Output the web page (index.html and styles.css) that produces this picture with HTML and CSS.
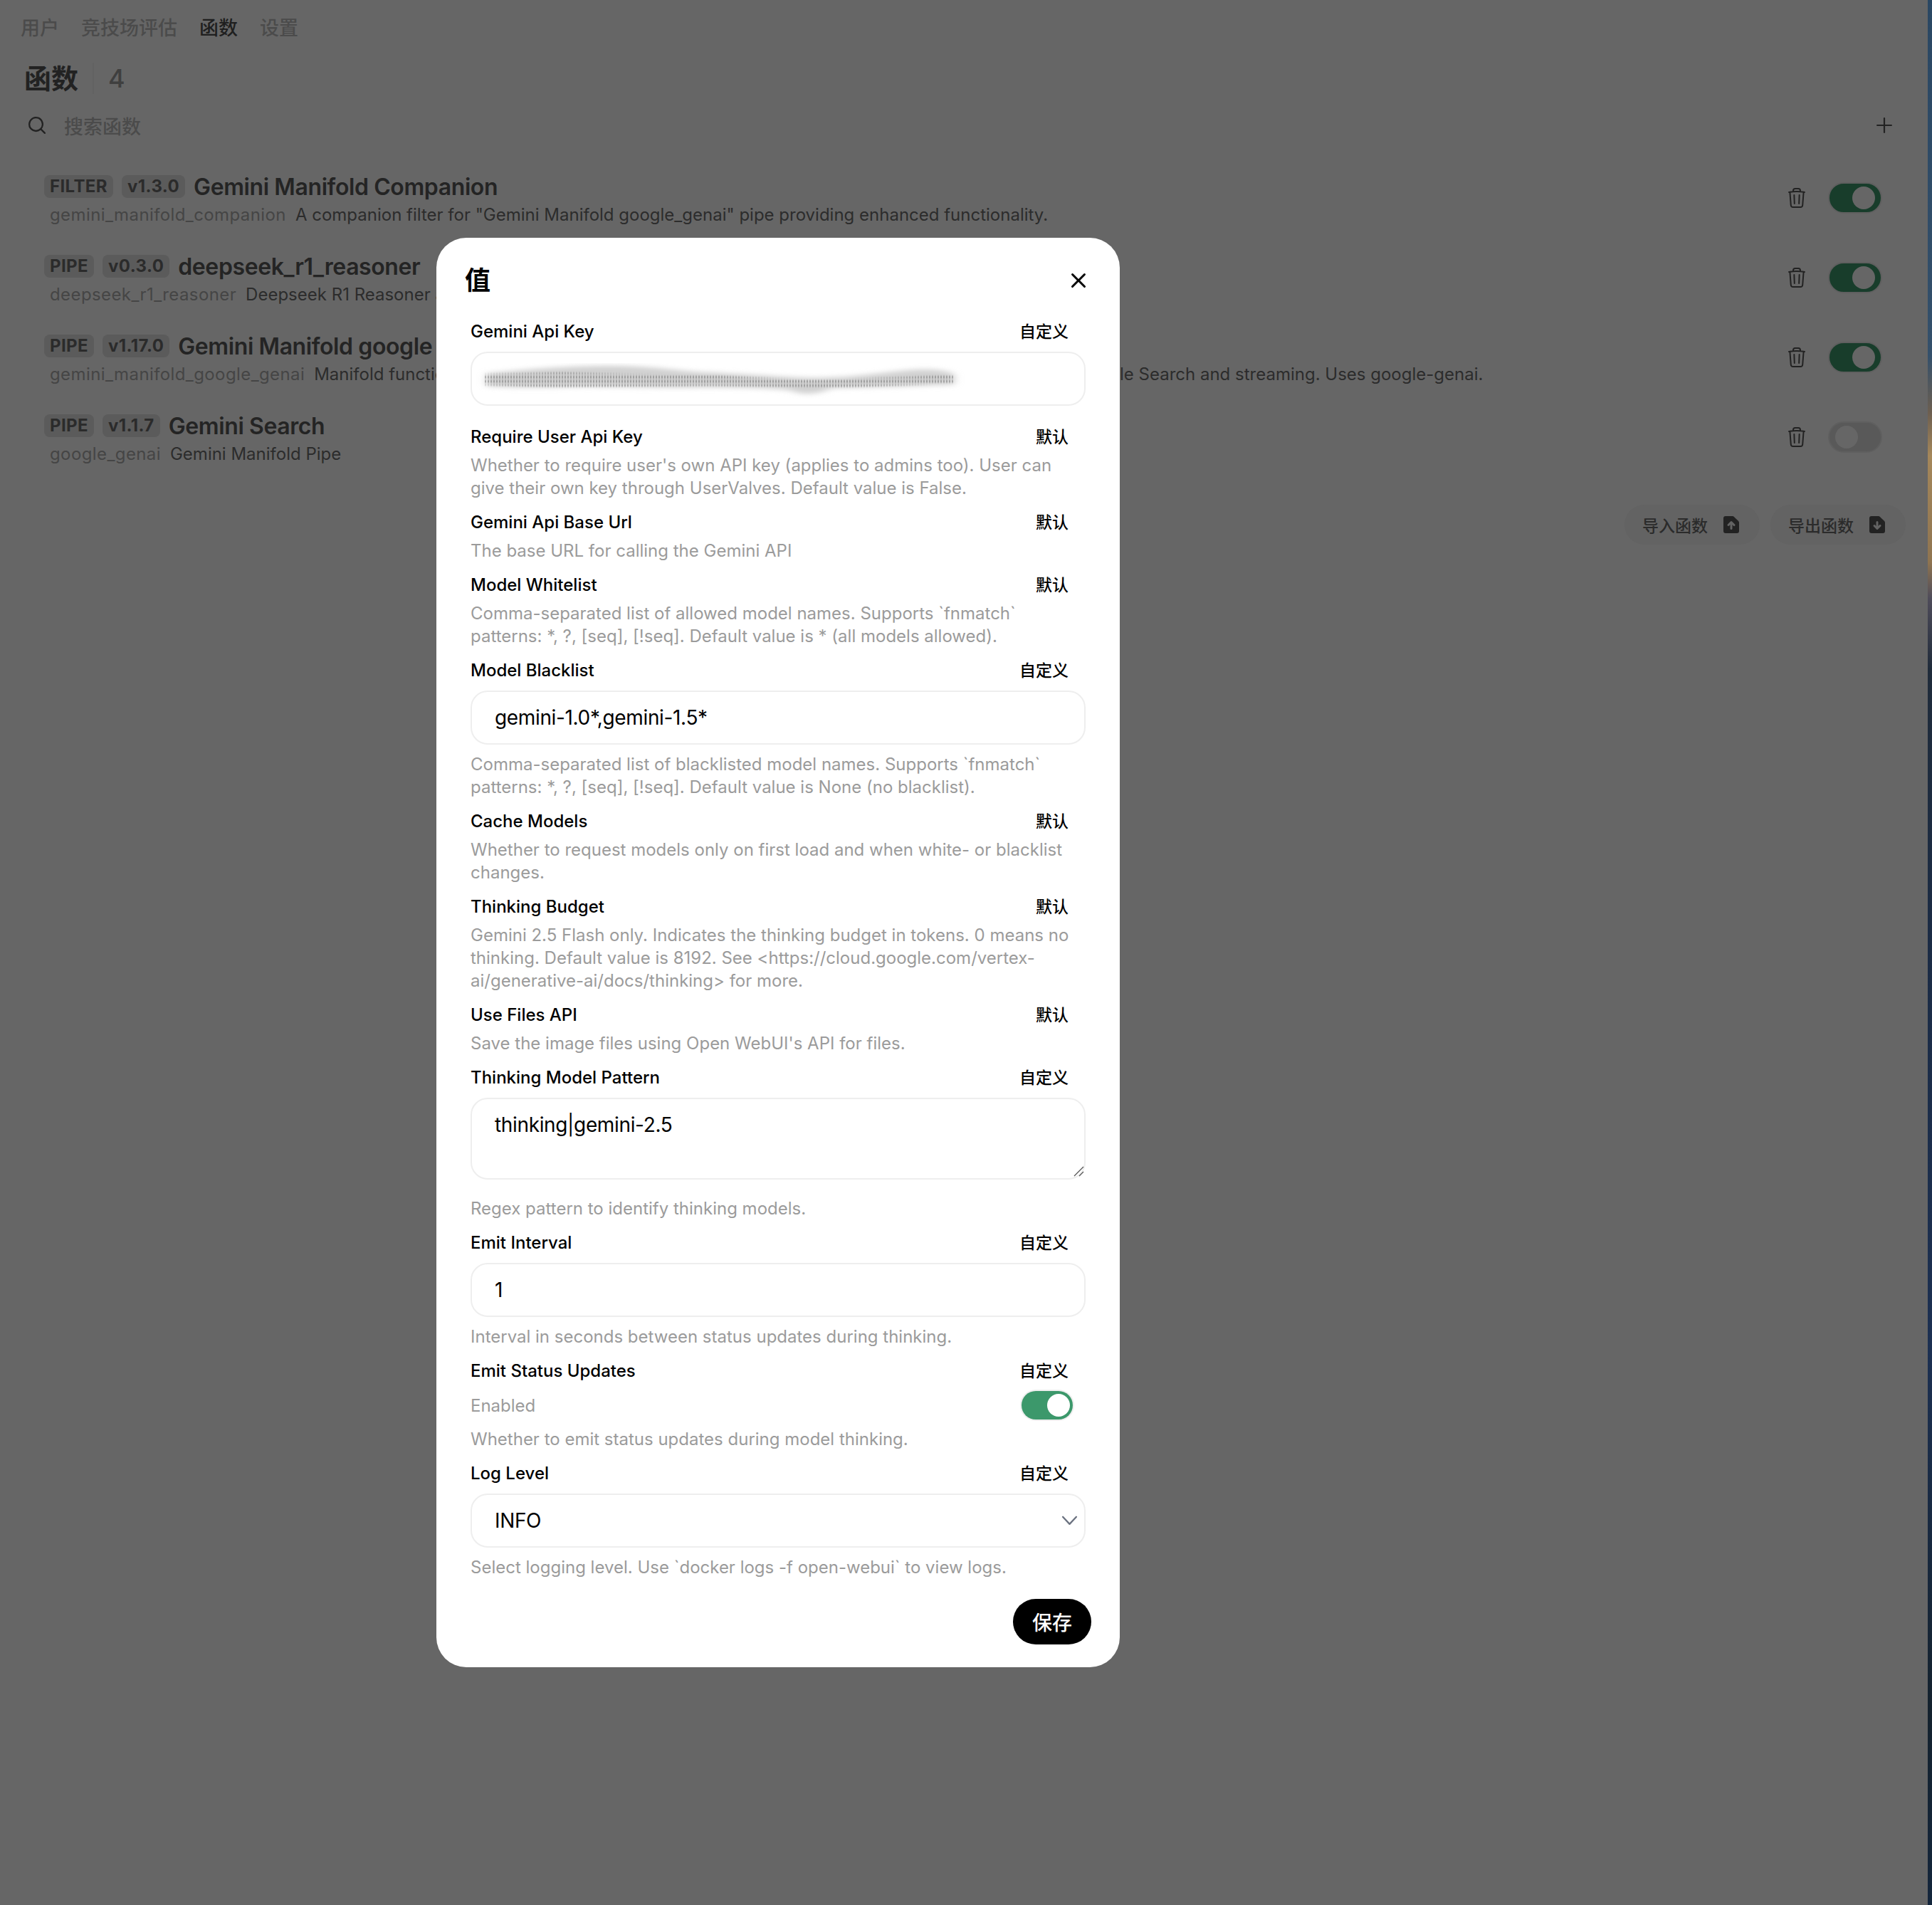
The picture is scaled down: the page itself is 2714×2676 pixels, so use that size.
FILE: index.html
```html
<!DOCTYPE html>
<html lang="zh-CN">
<head>
<meta charset="utf-8">
<title>函数</title>
<link rel="stylesheet" href="styles.css">
</head>
<body>
<div class="app">
  <nav class="tabs">
    <span class="tab">用户</span>
    <span class="tab">竞技场评估</span>
    <span class="tab tab-active">函数</span>
    <span class="tab">设置</span>
  </nav>
  <header class="heading">
    <h1 class="heading-title">函数</h1>
    <span class="heading-rule"></span>
    <span class="heading-count">4</span>
  </header>
  <div class="search">
    <svg class="search-icon" viewBox="0 0 20 20" fill="currentColor"><path fill-rule="evenodd" clip-rule="evenodd" d="M9 3.5a5.5 5.5 0 1 0 0 11 5.5 5.5 0 0 0 0-11ZM2 9a7 7 0 1 1 12.452 4.391l3.328 3.329a.75.75 0 1 1-1.06 1.06l-3.329-3.328A7 7 0 0 1 2 9Z"/></svg>
    <span class="search-placeholder">搜索函数</span>
    <svg class="plus-icon" viewBox="0 0 20 20" fill="none" stroke="currentColor" stroke-width="2" stroke-linecap="round"><path d="M10 1v18M1 10h18"/></svg>
  </div>
  <ul class="fn-list">
    <li class="fn-row">
      <div class="fn-text">
        <div class="fn-line1"><span class="badge">FILTER</span><span class="badge">v1.3.0</span><span class="fn-name">Gemini Manifold Companion</span></div>
        <div class="fn-line2"><span class="fn-id">gemini_manifold_companion</span><span class="fn-desc">A companion filter for "Gemini Manifold google_genai" pipe providing enhanced functionality.</span></div>
      </div>
      <div class="fn-actions">
        <svg class="trash" viewBox="0 0 24 24" fill="none" stroke="currentColor" stroke-width="1.5" stroke-linecap="round" stroke-linejoin="round"><path d="m14.74 9-.346 9m-4.788 0L9.26 9m9.968-3.21c.342.052.682.107 1.022.166m-1.022-.165L18.16 19.673a2.25 2.25 0 0 1-2.244 2.077H8.084a2.25 2.25 0 0 1-2.244-2.077L4.772 5.79m14.456 0a48.108 48.108 0 0 0-3.478-.397m-12 .562c.34-.059.68-.114 1.022-.165m0 0a48.11 48.11 0 0 1 3.478-.397m7.5 0v-.916c0-1.18-.91-2.164-2.09-2.201a51.964 51.964 0 0 0-3.32 0c-1.18.037-2.09 1.022-2.09 2.201v.916m7.5 0a48.667 48.667 0 0 0-7.5 0"/></svg>
        <span class="switch switch-on"><span class="knob"></span></span>
      </div>
    </li>
    <li class="fn-row">
      <div class="fn-text">
        <div class="fn-line1"><span class="badge">PIPE</span><span class="badge">v0.3.0</span><span class="fn-name">deepseek_r1_reasoner</span></div>
        <div class="fn-line2"><span class="fn-id">deepseek_r1_reasoner</span><span class="fn-desc">Deepseek R1 Reasoner a</span></div>
      </div>
      <div class="fn-actions">
        <svg class="trash" viewBox="0 0 24 24" fill="none" stroke="currentColor" stroke-width="1.5" stroke-linecap="round" stroke-linejoin="round"><path d="m14.74 9-.346 9m-4.788 0L9.26 9m9.968-3.21c.342.052.682.107 1.022.166m-1.022-.165L18.16 19.673a2.25 2.25 0 0 1-2.244 2.077H8.084a2.25 2.25 0 0 1-2.244-2.077L4.772 5.79m14.456 0a48.108 48.108 0 0 0-3.478-.397m-12 .562c.34-.059.68-.114 1.022-.165m0 0a48.11 48.11 0 0 1 3.478-.397m7.5 0v-.916c0-1.18-.91-2.164-2.09-2.201a51.964 51.964 0 0 0-3.32 0c-1.18.037-2.09 1.022-2.09 2.201v.916m7.5 0a48.667 48.667 0 0 0-7.5 0"/></svg>
        <span class="switch switch-on"><span class="knob"></span></span>
      </div>
    </li>
    <li class="fn-row">
      <div class="fn-text">
        <div class="fn-line1"><span class="badge">PIPE</span><span class="badge">v1.17.0</span><span class="fn-name">Gemini Manifold google</span></div>
        <div class="fn-line2"><span class="fn-id">gemini_manifold_google_genai</span><span class="fn-desc">Manifold function for Gemini Developer API and Vertex AI. Supports native image generations, Google Search and streaming. Uses google-genai.</span></div>
      </div>
      <div class="fn-actions">
        <svg class="trash" viewBox="0 0 24 24" fill="none" stroke="currentColor" stroke-width="1.5" stroke-linecap="round" stroke-linejoin="round"><path d="m14.74 9-.346 9m-4.788 0L9.26 9m9.968-3.21c.342.052.682.107 1.022.166m-1.022-.165L18.16 19.673a2.25 2.25 0 0 1-2.244 2.077H8.084a2.25 2.25 0 0 1-2.244-2.077L4.772 5.79m14.456 0a48.108 48.108 0 0 0-3.478-.397m-12 .562c.34-.059.68-.114 1.022-.165m0 0a48.11 48.11 0 0 1 3.478-.397m7.5 0v-.916c0-1.18-.91-2.164-2.09-2.201a51.964 51.964 0 0 0-3.32 0c-1.18.037-2.09 1.022-2.09 2.201v.916m7.5 0a48.667 48.667 0 0 0-7.5 0"/></svg>
        <span class="switch switch-on"><span class="knob"></span></span>
      </div>
    </li>
    <li class="fn-row">
      <div class="fn-text">
        <div class="fn-line1"><span class="badge">PIPE</span><span class="badge">v1.1.7</span><span class="fn-name">Gemini Search</span></div>
        <div class="fn-line2"><span class="fn-id">google_genai</span><span class="fn-desc">Gemini Manifold Pipe</span></div>
      </div>
      <div class="fn-actions">
        <svg class="trash" viewBox="0 0 24 24" fill="none" stroke="currentColor" stroke-width="1.5" stroke-linecap="round" stroke-linejoin="round"><path d="m14.74 9-.346 9m-4.788 0L9.26 9m9.968-3.21c.342.052.682.107 1.022.166m-1.022-.165L18.16 19.673a2.25 2.25 0 0 1-2.244 2.077H8.084a2.25 2.25 0 0 1-2.244-2.077L4.772 5.79m14.456 0a48.108 48.108 0 0 0-3.478-.397m-12 .562c.34-.059.68-.114 1.022-.165m0 0a48.11 48.11 0 0 1 3.478-.397m7.5 0v-.916c0-1.18-.91-2.164-2.09-2.201a51.964 51.964 0 0 0-3.32 0c-1.18.037-2.09 1.022-2.09 2.201v.916m7.5 0a48.667 48.667 0 0 0-7.5 0"/></svg>
        <span class="switch switch-off"><span class="knob"></span></span>
      </div>
    </li>
  </ul>
  <div class="io-bar">
    <button class="io-btn">导入函数
      <svg class="io-icon" viewBox="0 0 16 16" fill="currentColor"><path fill-rule="evenodd" clip-rule="evenodd" d="M4 2a1.5 1.5 0 0 0-1.5 1.5v9A1.5 1.5 0 0 0 4 14h8a1.5 1.5 0 0 0 1.5-1.5V6.621a1.5 1.5 0 0 0-.44-1.06L9.94 2.439A1.5 1.5 0 0 0 8.878 2H4Zm4 9.5a.75.75 0 0 1-.75-.75V8.06l-.72.72a.75.75 0 0 1-1.06-1.06l2-2a.75.75 0 0 1 1.06 0l2 2a.75.75 0 1 1-1.06 1.06l-.72-.72v2.69a.75.75 0 0 1-.75.75Z"/></svg>
    </button>
    <button class="io-btn">导出函数
      <svg class="io-icon" viewBox="0 0 16 16" fill="currentColor"><path fill-rule="evenodd" clip-rule="evenodd" d="M4 2a1.5 1.5 0 0 0-1.5 1.5v9A1.5 1.5 0 0 0 4 14h8a1.5 1.5 0 0 0 1.5-1.5V6.621a1.5 1.5 0 0 0-.44-1.06L9.94 2.439A1.5 1.5 0 0 0 8.878 2H4Zm4 3.5a.75.75 0 0 1 .75.75v2.69l.72-.72a.75.75 0 1 1 1.06 1.06l-2 2a.75.75 0 0 1-1.06 0l-2-2a.75.75 0 0 1 1.06-1.06l.72.72V6.25A.75.75 0 0 1 8 5.5Z"/></svg>
    </button>
  </div>

  <section class="modal">
    <div class="modal-head">
      <h2 class="modal-title">值</h2>
      <svg class="close-icon" viewBox="0 0 20 20" fill="currentColor"><path d="M6.28 5.22a.75.75 0 00-1.06 1.06L8.94 10l-3.72 3.72a.75.75 0 101.06 1.06L10 11.06l3.72 3.72a.75.75 0 101.06-1.06L11.06 10l3.72-3.72a.75.75 0 00-1.06-1.06L10 8.94 6.28 5.22z"/></svg>
    </div>
    <div class="form">
      <div class="field">
        <div class="field-head"><span class="field-label">Gemini Api Key</span><span class="field-status">自定义</span></div>
        <div class="control control-secret">
          <svg class="smudge" viewBox="0 0 690 50" width="690" height="50">
            <defs>
              <pattern id="stripes" width="4" height="6" patternUnits="userSpaceOnUse">
                <rect width="2" height="3.5" fill="#5f5f5f"/>
              </pattern>
              <filter id="soft" x="-5%" y="-60%" width="110%" height="220%"><feGaussianBlur stdDeviation="6 3.5"/></filter>
              <filter id="fine" x="-5%" y="-60%" width="110%" height="220%"><feGaussianBlur stdDeviation="0.7 1.1"/></filter>
            </defs>
            <path filter="url(#soft)" fill="#d0d0d0" d="M14 15 C60 10 120 4 185 4 C250 4 290 12 320 13 C390 16 430 20 472 21 C540 21 590 9 631 9 C650 9 665 12 672 16 L672 30 C620 32 560 34 500 35 C480 44 460 46 440 38 C400 34 350 34 313 34 C260 35 200 33 150 33 C100 34 50 35 14 32 Z"/>
            <path filter="url(#fine)" fill="url(#stripes)" opacity=".5" d="M10 15 L120 13 L210 15 L320 17 C400 20 470 24 520 22 L670 17 L670 29 L520 34 L320 32 L210 33 L120 34 L10 31 Z"/>
          </svg>
        </div>
      </div>
      <div class="field">
        <div class="field-head"><span class="field-label">Require User Api Key</span><span class="field-status">默认</span></div>
        <p class="field-desc">Whether to require user's own API key (applies to admins too). User can give their own key through UserValves. Default value is False.</p>
      </div>
      <div class="field">
        <div class="field-head"><span class="field-label">Gemini Api Base Url</span><span class="field-status">默认</span></div>
        <p class="field-desc">The base URL for calling the Gemini API</p>
      </div>
      <div class="field">
        <div class="field-head"><span class="field-label">Model Whitelist</span><span class="field-status">默认</span></div>
        <p class="field-desc">Comma-separated list of allowed model names. Supports `fnmatch` patterns: *, ?, [seq], [!seq]. Default value is * (all models allowed).</p>
      </div>
      <div class="field">
        <div class="field-head"><span class="field-label">Model Blacklist</span><span class="field-status">自定义</span></div>
        <div class="control">gemini-1.0*,gemini-1.5*</div>
        <p class="field-desc">Comma-separated list of blacklisted model names. Supports `fnmatch` patterns: *, ?, [seq], [!seq]. Default value is None (no blacklist).</p>
      </div>
      <div class="field">
        <div class="field-head"><span class="field-label">Cache Models</span><span class="field-status">默认</span></div>
        <p class="field-desc">Whether to request models only on first load and when white- or blacklist changes.</p>
      </div>
      <div class="field">
        <div class="field-head"><span class="field-label">Thinking Budget</span><span class="field-status">默认</span></div>
        <p class="field-desc">Gemini 2.5 Flash only. Indicates the thinking budget in tokens. 0 means no thinking. Default value is 8192. See &lt;https://cloud.google.com/vertex-ai/generative-ai/docs/thinking&gt; for more.</p>
      </div>
      <div class="field">
        <div class="field-head"><span class="field-label">Use Files API</span><span class="field-status">默认</span></div>
        <p class="field-desc">Save the image files using Open WebUI's API for files.</p>
      </div>
      <div class="field">
        <div class="field-head"><span class="field-label">Thinking Model Pattern</span><span class="field-status">自定义</span></div>
        <div class="control control-area">thinking|gemini-2.5
          <svg class="grip" viewBox="0 0 16 16" fill="none" stroke="#555" stroke-width="1.3"><path d="M2 15 15 2M9 15l6-6"/></svg>
        </div>
        <p class="field-desc">Regex pattern to identify thinking models.</p>
      </div>
      <div class="field">
        <div class="field-head"><span class="field-label">Emit Interval</span><span class="field-status">自定义</span></div>
        <div class="control">1</div>
        <p class="field-desc">Interval in seconds between status updates during thinking.</p>
      </div>
      <div class="field">
        <div class="field-head"><span class="field-label">Emit Status Updates</span><span class="field-status">自定义</span></div>
        <div class="toggle-row"><span class="toggle-text">Enabled</span><span class="mswitch"><span class="mknob"></span></span></div>
        <p class="field-desc field-desc-gap">Whether to emit status updates during model thinking.</p>
      </div>
      <div class="field">
        <div class="field-head"><span class="field-label">Log Level</span><span class="field-status">自定义</span></div>
        <div class="control control-select">INFO
          <svg class="chevron" viewBox="0 0 20 20" fill="none" stroke="#6b7280" stroke-width="1.7" stroke-linecap="round" stroke-linejoin="round"><path d="M3 6.5 10 14l7-7.5"/></svg>
        </div>
        <p class="field-desc">Select logging level. Use `docker logs -f open-webui` to view logs.</p>
      </div>
    </div>
    <div class="modal-foot"><button class="save">保存</button></div>
  </section>
</div>
<div class="wallpaper"></div>
</body>
</html>
```
FILE: styles.css
```css
* { box-sizing: border-box; }
html, body { margin: 0; padding: 0; }
body {
  width: 2714px;
  height: 2676px;
  display: flex;
  overflow: hidden;
  background: #666;
  font-family: Inter, "Noto Sans CJK SC", sans-serif;
}
.app {
  position: relative;
  width: 2708px;
  height: 2676px;
  flex: none;
  background: #666;
  color: #262626;
}
.wallpaper {
  flex: 1;
  background: linear-gradient(180deg, #2a4763 0, #34506b 500px, #6d5f50 580px, #a5875a 640px, #8f7450 790px, #4f4c5a 840px, #1f2b3a 940px, #1b2b44 1300px, #1c3052 1900px, #14222e 2400px, #14263c 2676px);
}

/* tabs */
.tabs { display: flex; gap: 31px; height: 74px; padding-left: 29px; align-items: center; font-size: 27px; font-weight: 500; color: #4b4b4b; }
.tab-active { color: #1f1f1f; }

/* heading */
.heading { display: flex; align-items: center; height: 48px; margin-top: 12px; padding-left: 34px; }
.heading-title { margin: 0; font-size: 38px; line-height: 48px; font-weight: 600; color: #222; }
.heading-rule { width: 2px; height: 44px; margin: 0 20px 0 20px; background: #626262; }
.heading-count { font-size: 36px; font-weight: 500; color: #3f3f3f; }

/* search */
.search { display: flex; align-items: center; height: 40px; margin-top: 22px; padding: 0 50px 0 37px; color: #222; }
.search-icon { width: 30px; height: 30px; flex: none; }
.search-placeholder { flex: 1; margin-left: 23px; font-size: 27px; font-weight: 500; color: #4b4b4b; }
.plus-icon { width: 22px; height: 22px; flex: none; }

/* list */
.fn-list { list-style: none; margin: 26px 0 0; padding: 0 64px 0 62px; }
.fn-row { display: flex; justify-content: space-between; height: 112px; }
.fn-text { padding-top: 24px; }
.fn-line1 { display: flex; align-items: center; gap: 12px; height: 32px; }
.badge { height: 32px; padding: 0 8px; border-radius: 8px; background: #5b5b5b; font-size: 24px; line-height: 32px; font-weight: 700; letter-spacing: .4px; color: #2b2b2b; }
.fn-name { padding-top: 2px; font-size: 32px; line-height: 40px; font-weight: 600; letter-spacing: -.4px; color: #242424; white-space: nowrap; }
.fn-line2 { display: flex; gap: 13px; height: 32px; margin-top: 8px; padding-left: 8px; font-size: 24px; line-height: 32px; white-space: nowrap; }
.fn-id { color: #454545; letter-spacing: .4px; }
.fn-desc { color: #2c2c2c; }
.fn-actions { display: flex; align-items: center; gap: 28px; height: 44px; margin-top: 34px; }
.trash { width: 32px; height: 32px; color: #222; }
.switch { display: flex; align-items: center; width: 76px; height: 44px; padding: 0 8px; border-radius: 22px; border: 2px solid transparent; }
.switch-on { background: #183d2b; border-color: #5f5f5f; justify-content: flex-end; }
.switch-off { background: #595959; border-color: #5f5f5f; }
.knob { width: 32px; height: 32px; border-radius: 50%; background: #666; }

/* import / export */
.io-bar { display: flex; justify-content: flex-end; gap: 15px; margin-top: 39px; padding-right: 31px; }
.io-btn { display: flex; align-items: center; gap: 17px; width: 190px; height: 56px; padding: 0 0 0 25px; border: 0; border-radius: 28px; background: #636363; color: #2b2b2b; font: 500 23px Inter, "Noto Sans CJK SC", sans-serif; }
.io-icon { width: 32px; height: 32px; flex: none; color: #222; }

/* modal */
.modal {
  position: absolute;
  left: 613px;
  top: 334px;
  width: 960px;
  height: 2008px;
  border-radius: 42px;
  background: #fff;
  color: #000;
}
.modal-head { display: flex; align-items: center; justify-content: space-between; height: 108px; padding: 40px 38px 28px 40px; }
.modal-title { margin: 0; font-size: 36px; line-height: 40px; font-weight: 600; }
.close-icon { width: 40px; height: 40px; }
.form { padding: 0 48px; }
.field { display: flow-root; margin-bottom: 8px; }
.field-head { display: flex; align-items: center; justify-content: space-between; height: 48px; padding-right: 24px; font-size: 24px; line-height: 32px; }
.field-label { font-weight: 500; color: #000; }
.field-status { font-size: 23px; font-weight: 500; color: #000; }
.field-desc { margin: 0; font-size: 24px; line-height: 32px; color: #9b9b9b; }
.field-desc-gap { margin-top: 8px; }
.control {
  position: relative;
  display: flex;
  align-items: center;
  height: 76px;
  margin: 4px 0 12px;
  padding: 0 32px;
  border: 2px solid #eee;
  border-radius: 24px;
  background: #fff;
  font-size: 28px;
  line-height: 40px;
  letter-spacing: -.35px;
  color: #000;
}
.control-area { align-items: flex-start; height: 115px; margin-bottom: 25px; padding-top: 16px; }
.grip { position: absolute; right: 0; bottom: 2px; width: 16px; height: 16px; }
.smudge { position: absolute; left: 6px; top: 14px; }
.chevron { position: absolute; right: 7px; top: 22px; width: 27px; height: 27px; }
.toggle-row { display: flex; align-items: center; justify-content: space-between; height: 48px; padding-right: 18px; }
.toggle-text { font-size: 24px; color: #9b9b9b; }
.mswitch { display: flex; align-items: center; justify-content: flex-end; width: 72px; height: 40px; padding: 0 4px; border-radius: 20px; background: #3c986b; box-shadow: 0 0 0 2px #eee; }
.mknob { width: 32px; height: 32px; border-radius: 50%; background: #fff; }
.modal-foot { display: flex; justify-content: flex-end; margin-top: 28px; padding-right: 40px; }
.save { width: 110px; height: 64px; border: 0; border-radius: 32px; background: #000; color: #fff; font: 500 28px Inter, "Noto Sans CJK SC", sans-serif; }
```
